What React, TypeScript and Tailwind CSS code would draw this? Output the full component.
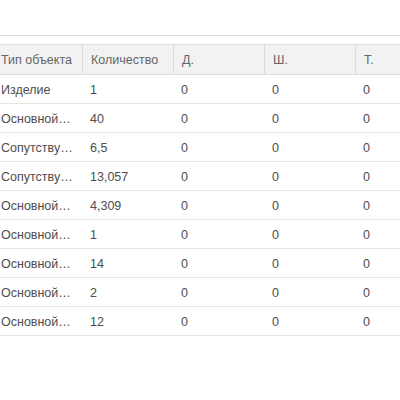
const columns = ["Тип объекта", "Количество", "Д.", "Ш.", "Т."];

const rows = [
  ["Изделие", "1"],
  ["Основной…", "40"],
  ["Сопутству…", "6,5"],
  ["Сопутству…", "13,057"],
  ["Основной…", "4,309"],
  ["Основной…", "1"],
  ["Основной…", "14"],
  ["Основной…", "2"],
  ["Основной…", "12"],
];

const widths = ["w-[89px]", "w-[91px]", "w-[91px]", "w-[91px]", "w-[91px]"];

export default function App() {
  return (
    <div className="w-[400px] h-[400px] bg-white overflow-hidden font-['Liberation_Sans',Arial,sans-serif] text-[12.5px] text-[#4d4d4d]">
      <div className="h-[36px] border-b border-[#d9d9d9]" />
      <div className="mt-[8px] -ml-[7px] w-[460px]">
        {/* header */}
        <div className="flex h-[31px] bg-[#f2f2f2] border-t border-b border-[#dedede]">
          {columns.map((c, i) => (
            <div
              key={c}
              className={`${widths[i]} shrink-0 flex items-center px-[8px] pt-[1px] text-[#666] ${i > 0 ? "border-l border-[#dcdcdc]" : ""}`}
            >
              {c}
            </div>
          ))}
        </div>
        {/* body */}
        {rows.map((r, i) => (
          <div key={i} className="flex h-[29px] pt-[2px] border-b border-[#e6e6e6]">
            <div className="w-[89px] shrink-0 flex items-center pl-[8px] whitespace-nowrap">{r[0]}</div>
            <div className="w-[91px] shrink-0 flex items-center px-[8px]">{r[1]}</div>
            <div className="w-[91px] shrink-0 flex items-center px-[8px]">0</div>
            <div className="w-[91px] shrink-0 flex items-center px-[8px]">0</div>
            <div className="w-[91px] shrink-0 flex items-center px-[8px]">0</div>
          </div>
        ))}
      </div>
    </div>
  );
}
